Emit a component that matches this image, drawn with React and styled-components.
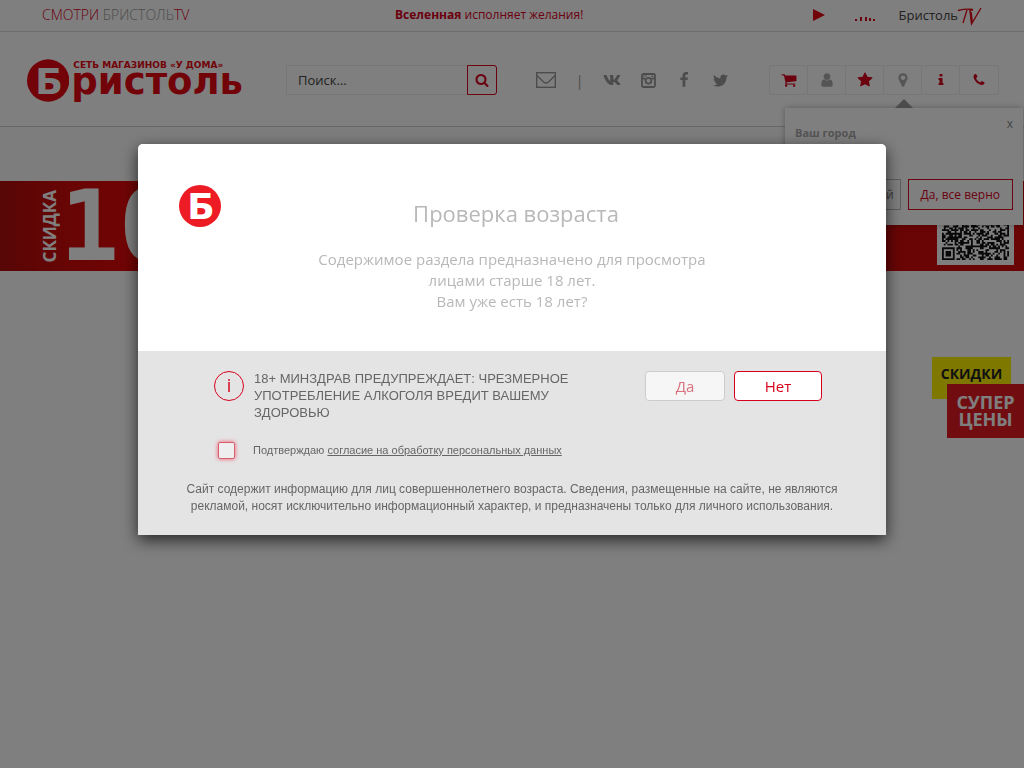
import React from 'react';
import styled, { createGlobalStyle } from 'styled-components';
import { FaVk } from 'react-icons/fa';

const GlobalStyle = createGlobalStyle`
	* {
		box-sizing: border-box;
	}

	body {
		margin: 0;
		background: #fff;
		font-family: 'Open Sans', 'Noto Sans', sans-serif;
		color: #555;
	}

	button,
	input {
		font-family: inherit;
		margin: 0;
	}

	p,
	h2 {
		margin: 0;
		font-weight: 400;
	}

	a {
		color: inherit;
	}
`;

const RED = '#d6001c';

// Icons, all on the same 1792 grid
const PATHS = {
	search: 'M1216 832q0-185-131.5-316.5t-316.5-131.5-316.5 131.5-131.5 316.5 131.5 316.5 316.5 131.5 316.5-131.5 131.5-316.5zm512 832q0 52-38 90t-90 38q-54 0-90-38l-343-342q-179 124-399 124-143 0-273.5-55.5t-225-150-150-225-55.5-273.5 55.5-273.5 150-225 225-150 273.5-55.5 273.5 55.5 225 150 150 225 55.5 273.5q0 220-124 399l343 343q37 37 37 90z',
	cart: 'M704 1536q0 52-38 90t-90 38-90-38-38-90 38-90 90-38 90 38 38 90zm896 0q0 52-38 90t-90 38-90-38-38-90 38-90 90-38 90 38 38 90zm128-1088v512q0 24-16.5 42.5t-40.5 21.5l-1044 122q13 60 13 70 0 16-24 64h920q26 0 45 19t19 45-19 45-45 19h-1024q-26 0-45-19t-19-45q0-11 8-31.5t16-36 21.5-40 15.5-29.5l-177-823h-204q-26 0-45-19t-19-45 19-45 45-19h256q16 0 28.5 6.5t19.5 15.5 13 24.5 8 26 5.5 29.5 4.5 26h1201q26 0 45 19t19 45z',
	user: 'M1536 1399q0 109-62.5 187t-150.5 78h-854q-88 0-150.5-78t-62.5-187q0-85 8.5-160.5t31.5-152 58.5-131 94-89 134.5-34.5q131 128 313 128t313-128q76 0 134.5 34.5t94 89 58.5 131 31.5 152 8.5 160.5zm-256-887q0 159-112.5 271.5t-271.5 112.5-271.5-112.5-112.5-271.5 112.5-271.5 271.5-112.5 271.5 112.5 112.5 271.5z',
	star: 'M1728 647q0 22-26 48l-363 354 86 500q1 7 1 20 0 21-10.5 35.5t-30.5 14.5q-19 0-40-12l-449-236-449 236q-22 12-40 12-21 0-31.5-14.5t-10.5-35.5q0-6 2-20l86-500-364-354q-25-27-25-48 0-37 56-46l502-73 225-455q19-41 49-41t49 41l225 455 502 73q56 9 56 46z',
	pin: 'M1152 640q0-106-75-181t-181-75-181 75-75 181 75 181 181 75 181-75 75-181zm256 0q0 109-33 179l-364 774q-16 33-47.5 52t-67.5 19-67.5-19-46.5-52l-365-774q-33-70-33-179 0-212 150-362t362-150 362 150 150 362z',
	info: 'M1216 1344v128q0 26-19 45t-45 19h-512q-26 0-45-19t-19-45v-128q0-26 19-45t45-19h64v-384h-64q-26 0-45-19t-19-45v-128q0-26 19-45t45-19h384q26 0 45 19t19 45v576h64q26 0 45 19t19 45zm-128-1152v192q0 26-19 45t-45 19h-256q-26 0-45-19t-19-45v-192q0-26 19-45t45-19h256q26 0 45 19t19 45z',
	phone: 'M1600 1240q0 27-10 70.5t-21 68.5q-21 50-122 106-94 51-186 51-27 0-53-3.5t-57-12.5-47-14.5-55.5-20.5-49.5-18q-98-35-175-83-127-79-264-216t-216-264q-48-77-83-175-3-9-18-49.5t-20.5-55.5-14.5-47-12.5-57-3.5-53q0-92 51-186 56-101 106-122 25-11 68.5-21t70.5-10q14 0 21 3 18 6 53 76 11 19 30 54t35 63.5 31 53.5q3 4 17.5 25t21.5 35.5 7 28.5q0 20-28.5 50t-62 55-62 53-28.5 46q0 9 5 22.5t8.5 20.5 14 24 11.5 19q76 137 174 235t235 174q2 1 19 11.5t24 14 20.5 8.5 22.5 5q18 0 46-28.5t53-62 55-62 50-28.5q14 0 28.5 7t35.5 21.5 25 17.5q25 15 53.5 31t63.5 35 54 30q70 35 76 53 3 7 3 21z',
	facebook: 'M1343 12v264h-157q-86 0-116 36t-30 108v189h293l-39 296h-254v759h-306v-759h-255v-296h255v-218q0-186 104-288.5t277-102.5q147 0 228 12z',
	twitter: 'M1684 408q-67 98-162 167 1 14 1 42 0 130-38 259.5t-115.5 248.5-184.5 210.5-258 146-323 54.5q-271 0-496-145 35 4 78 4 225 0 401-138-105-2-188-64.5t-114-159.5q33 5 61 5 43 0 85-11-112-23-185.5-111.5t-73.5-205.5v-4q68 38 146 41-66-44-105-115t-39-154q0-88 44-163 121 149 294.5 238.5t371.5 99.5q-8-38-8-74 0-134 94.5-228.5t228.5-94.5q140 0 236 102 109-21 205-78-37 115-142 178 93-10 186-50z',
};

function Icon({ name, size = 16 }) {
	return (
		<svg width={size} height={size} viewBox="0 0 1792 1792" fill="currentColor" aria-hidden="true">
			<path d={PATHS[name]}/>
		</svg>
	);
}

function EnvelopeIcon() {
	return (
		<svg width="20" height="16" viewBox="0 0 20 16" fill="none" stroke="currentColor" strokeWidth="1.4" aria-hidden="true">
			<rect x="0.7" y="0.7" width="18.6" height="14.6"/>
			<path d="M1 3.5 L7.5 10 Q10 12 12.5 10 L19 3.5"/>
		</svg>
	);
}

function InstagramIcon() {
	return (
		<svg width="15" height="15" viewBox="0 0 15 15" fill="none" stroke="currentColor" strokeWidth="1.8" aria-hidden="true">
			<rect x="1" y="1" width="13" height="13" rx="1.5"/>
			<circle cx="7.5" cy="7.8" r="2.9"/>
			<path d="M1 5.6 H4.6 M10.4 5.6 H14"/>
			<path d="M3 1 V4 M5 1 V4" strokeWidth="0.9"/>
			<rect x="10.5" y="2.6" width="1.8" height="1.4" fill="currentColor" stroke="none"/>
		</svg>
	);
}

// TopBar
const TopBar = styled.div`
	display: flex;
	align-items: center;
	height: 32px;
	padding: 0 42px 2px;
	border-bottom: 1px solid #d8d8d8;
	font-size: 12px;
	line-height: 18px;
	color: ${RED};
`;

const TvLink = styled.a`
	flex: 0 1 353px;
	font-size: 14px;
	text-decoration: none;
	font-weight: 300;

	span {
		color: #999;
	}
`;

const Player = styled.div`
	display: flex;
	align-items: center;
	margin-left: auto;
`;

const PlayButton = styled.button`
	display: flex;
	padding: 0;
	border: 0;
	background: none;
	margin-right: 30px;
`;

const Equalizer = styled.svg`
	margin: 8px 24px 0 0;
`;

const TvLogo = styled.span`
	display: flex;
	align-items: center;
	font-size: 13px;
	color: #444;

	svg {
		margin-top: 4px;
	}
`;

// Header
const Header = styled.header`
	position: relative;
	display: flex;
	align-items: center;
	height: 95px;
	padding: 2px 25px 0 27px;
	border-bottom: 1px solid #ccc;
`;

const Logo = styled.a`
	display: flex;
	align-items: center;
	width: 216px;
	margin-right: 43px;
	color: #e30613;
	font-family: 'DejaVu Sans', sans-serif;
	font-weight: 700;
	text-decoration: none;
`;

const LogoText = styled.span`
	display: flex;
	flex-direction: column;
	margin-left: 2px;
	padding-bottom: 6px;
	white-space: nowrap;

	small {
		margin-left: 2px;
		font-size: 9px;
		line-height: 10px;
	}

	span {
		font-size: 37px;
		line-height: 24px;
	}
`;

const SearchForm = styled.form`
	display: flex;
	width: 211px;
	height: 30px;
	margin-right: 39px;
`;

const SearchInput = styled.input`
	flex: 1;
	min-width: 0;
	padding: 0 11px;
	border: 1px solid #eee;
	border-right: 0;
	background: #fff;
	font-size: 13px;

	&::placeholder {
		color: #444;
		opacity: 1;
	}
`;

const SearchButton = styled.button`
	display: flex;
	align-items: center;
	justify-content: center;
	width: 30px;
	padding: 0;
	border: 1px solid ${RED};
	border-radius: 0 3px 3px 0;
	background: #fff;
	color: ${RED};
`;

const Socials = styled.div`
	display: flex;
	flex: 1;
	align-items: center;
	justify-content: space-between;
	margin-right: 40px;
	font-size: 14px;
	color: #999;

	a {
		display: flex;
	}
`;

const UserNav = styled.nav`
	display: flex;
	height: 30px;
	border: 1px solid #eee;
	border-radius: 4px;
`;

const NavButton = styled.button`
	display: flex;
	align-items: center;
	justify-content: center;
	width: 38px;
	padding: 0;
	border: 0;
	border-right: 1px solid #eee;
	background: none;
	color: ${({ $muted }) => ($muted ? '#aaa' : RED)};

	&:last-child {
		border-right: 0;
	}
`;

// City confirmation drop-down under the pin button
const CityPopup = styled.div`
	position: absolute;
	top: 76px;
	right: 1px;
	width: 238px;
	height: 117px;
	padding: 9px 10px 15px;
	background: #fff;
	box-shadow: 0 0 6px rgba(0, 0, 0, 0.3);
	display: flex;
	flex-direction: column;
	z-index: 1;

	&::before {
		content: '';
		position: absolute;
		top: -9px;
		left: 110px;
		border: 9px solid transparent;
		border-top: 0;
		border-bottom-color: #999;
	}
`;

const CloseButton = styled.button`
	align-self: flex-end;
	height: 14px;
	padding: 0;
	border: 0;
	background: none;
	font-size: 12px;
	line-height: 14px;
	color: #888;
`;

const CityTitle = styled.strong`
	font-size: 11px;
	line-height: 16px;
	margin-top: -6px;
	color: #aaa;
`;

const CityButtons = styled.div`
	display: flex;
	justify-content: flex-end;
	gap: 7px;
	margin-top: auto;
`;

const CityButton = styled.button`
	height: 31px;
	padding: 0 ${({ $primary }) => ($primary ? 12 : 6)}px;
	border: 1px solid ${({ $primary }) => ($primary ? RED : '#bbb')};
	background: #fff;
	font-size: 12px;
	white-space: nowrap;
	color: ${({ $primary }) => ($primary ? RED : '#777')};
`;

// Banner
const Menu = styled.div`
	height: 54px;
	background: #fafafa;
`;

const Banner = styled.section`
	display: flex;
	align-items: center;
	height: 90px;
	padding: 0 10px 0 40px;
	overflow: hidden;
	background: linear-gradient(90deg, #b00c0c 0, #d20a0a 70px, #e60808 140px, #d20a0a 300px);
	color: #fff;
`;

const BannerLabel = styled.span`
	writing-mode: vertical-rl;
	transform: rotate(180deg);
	font-size: 17px;
	line-height: 20px;
	font-weight: 700;
`;

const BannerNumber = styled.span`
	font-family: 'DejaVu Sans Mono', monospace;
	font-weight: 700;
	font-size: 98px;
	line-height: 90px;
`;

const QrBox = styled.div`
	display: flex;
	align-self: flex-start;
	margin-left: auto;
	margin-top: 7px;
	padding: 5px;
	background: #fff;
`;

// Side badges
const Promo = styled.aside`
	display: flex;
	flex-direction: column;
	align-items: flex-end;
	margin-top: 86px;
	font-weight: 700;
`;

const SaleBadge = styled.a`
	width: 79px;
	height: 42px;
	margin-right: 13px;
	padding-top: 8px;
	background: #fff000;
	color: #222;
	font-size: 14px;
	line-height: 18px;
	text-align: center;
	text-decoration: none;
`;

const SuperBadge = styled.a`
	width: 77px;
	height: 54px;
	margin-top: -15px;
	padding-top: 10px;
	background: #e31b23;
	color: #fff;
	font-size: 18px;
	line-height: 17px;
	text-align: center;
	text-decoration: none;
`;

// Age check
const Overlay = styled.div`
	position: fixed;
	inset: 0;
	z-index: 10;
	padding: 144px 16px 16px;
	background: rgba(0, 0, 0, 0.5);
`;

const Modal = styled.div`
	max-width: 748px;
	margin: 0 auto;
	border-radius: 5px 5px 0 0;
	background: #e4e4e4;
	box-shadow: 0 5px 16px rgba(0, 0, 0, 0.7);
`;

const ModalHead = styled.div`
	display: grid;
	grid-template-columns: 42px 1fr 42px;
	padding: 41px 41px 39px;
	border-radius: 5px 5px 0 0;
	background: #fff;
	text-align: center;
	color: #b8b8b8;
`;

const ModalTitle = styled.h2`
	margin: 12px 0 20px;
	padding-left: 8px;
	font-size: 22px;
	line-height: 32px;
`;

const Question = styled.p`
	font-size: 15px;
	line-height: 21px;
`;

const ModalBody = styled.div`
	padding: 19px 40px 20px 76px;
	font-family: 'Liberation Sans', Arial, sans-serif;
	color: #666;
`;

const WarningRow = styled.div`
	display: flex;
	align-items: flex-start;
	padding-right: 24px;
`;

const InfoMark = styled.span`
	flex: none;
	width: 30px;
	height: 30px;
	margin: 1px 10px 0 0;
	border: 1px solid ${RED};
	border-radius: 50%;
	color: ${RED};
	font-family: 'Open Sans', sans-serif;
	font-size: 18px;
	line-height: 26px;
	text-align: center;
`;

const Warning = styled.p`
	width: 320px;
	font-size: 13px;
	line-height: 17px;
`;

const Answers = styled.div`
	display: flex;
	gap: 9px;
	margin: 1px 0 0 auto;
`;

const AnswerButton = styled.button`
	width: ${({ $active }) => ($active ? 88 : 80)}px;
	height: 30px;
	padding: 0;
	border: 1px solid ${({ $active }) => ($active ? RED : '#ccc')};
	border-radius: 4px;
	background: ${({ $active }) => ($active ? '#fff' : '#f6f6f6')};
	color: ${({ $active }) => ($active ? RED : '#d9717e')};
	font-family: 'Open Sans', sans-serif;
	font-size: 15px;
`;

const Consent = styled.div`
	display: flex;
	align-items: center;
	margin: 20px 0 22px 4px;
	font-size: 11px;
	line-height: 18px;

	input {
		appearance: none;
		width: 17px;
		height: 17px;
		margin-right: 18px;
		border: 1px solid #d8606e;
		border-radius: 2px;
		background: #eee;
		box-shadow: 0 0 4px #f0506a;
	}
`;

const Notice = styled.p`
	margin-left: -36px;
	font-size: 12px;
	line-height: 17px;
	text-align: center;
`;

function RoundLogo({ size, color }) {
	return (
		<svg width={size} height={size} viewBox="0 0 42 42" aria-hidden="true">
			<circle cx="21" cy="21" r="21" fill={color}/>
			<text x="22" y="34" textAnchor="middle" fontFamily="DejaVu Sans" fontWeight="700" fontSize="36" fill="#fff">Б</text>
		</svg>
	);
}

const QR_SIZE = 37;

function isFinder(x, y) {
	const inX = x < 7 || x >= QR_SIZE - 7;
	const inY = y < 7 || y >= QR_SIZE - 7;
	return inX && inY && !(x > 6 && y > 6);
}

function isDark(x, y) {
	if (isFinder(x, y)) {
		const dx = Math.abs((x < 7 ? x : x - QR_SIZE + 7) - 3);
		const dy = Math.abs((y < 7 ? y : y - QR_SIZE + 7) - 3);
		return Math.max(dx, dy) !== 2;
	}
	if ((x === 7 && y > QR_SIZE - 9) || (y === QR_SIZE - 8 && x < 8)) return false;
	const noise = Math.sin(x * 12.9898 + y * 78.233) * 43758.5453;
	return noise - Math.floor(noise) < 0.55;
}

function QrCode() {
	const cells = [];
	for (let y = 0; y < QR_SIZE; y++) {
		for (let x = 0; x < QR_SIZE; x++) {
			if (isDark(x, y)) cells.push(`M${x} ${y}h1v1h-1z`);
		}
	}
	return (
		<svg width="67" height="67" viewBox="0 0 37 37" aria-hidden="true">
			<path d={cells.join('')} fill="#111"/>
		</svg>
	);
}

export default function App() {
	return (
		<>
			<GlobalStyle/>
			<TopBar>
				<TvLink href="#tv">СМОТРИ <span>БРИСТОЛЬ</span>TV</TvLink>
				<div><b>Вселенная</b> исполняет желания!</div>
				<Player>
					<PlayButton aria-label="Play">
						<svg width="12" height="12" viewBox="0 0 12 12"><path d="M0 0 L12 6 L0 12z" fill="#e30613"/></svg>
					</PlayButton>
					<Equalizer width="20" height="4" viewBox="0 0 20 4" fill={RED}>
						<path d="M0 2h2v2h-2z M5 0h2v4h-2z M10 0h2v4h-2z M14 1h2v3h-2z M18 2h2v2h-2z"/>
					</Equalizer>
					<TvLogo>
						Бристоль
						<svg width="24" height="19" viewBox="0 0 24 19" fill="none" stroke="#e30613" strokeWidth="1.3" aria-hidden="true">
							<path d="M0 3.5 Q8 1.5 15 2.5 M9 3 L5 16 M12 3.5 L13.5 17 L23 1 M11 3 L15 3"/>
							<path d="M12.8 5 L14 15" strokeWidth="2"/>
						</svg>
					</TvLogo>
				</Player>
			</TopBar>
			<Header>
				<Logo href="#home">
					<RoundLogo size={43} color="#e30613"/>
					<LogoText>
						<small>СЕТЬ МАГАЗИНОВ «У ДОМА»</small>
						<span>ристоль</span>
					</LogoText>
				</Logo>
				<SearchForm>
					<SearchInput placeholder="Поиск..." aria-label="Поиск"/>
					<SearchButton type="button" aria-label="Найти"><Icon name="search" size={14}/></SearchButton>
				</SearchForm>
				<Socials>
					<a href="#mail" aria-label="Почта"><EnvelopeIcon/></a>
					<span>|</span>
					<a href="#vk" aria-label="VK"><FaVk size={18}/></a>
					<a href="#instagram" aria-label="Instagram"><InstagramIcon/></a>
					<a href="#facebook" aria-label="Facebook"><Icon name="facebook"/></a>
					<a href="#twitter" aria-label="Twitter"><Icon name="twitter" size={17}/></a>
				</Socials>
				<UserNav>
					<NavButton aria-label="Корзина"><Icon name="cart"/></NavButton>
					<NavButton aria-label="Профиль" $muted><Icon name="user"/></NavButton>
					<NavButton aria-label="Избранное"><Icon name="star"/></NavButton>
					<NavButton aria-label="Город" $muted><Icon name="pin"/></NavButton>
					<NavButton aria-label="Информация"><Icon name="info" size={14}/></NavButton>
					<NavButton aria-label="Телефон"><Icon name="phone" size={14}/></NavButton>
				</UserNav>
				<CityPopup>
					<CloseButton aria-label="Закрыть">x</CloseButton>
					<CityTitle>Ваш город</CityTitle>
					<CityButtons>
						<CityButton>Другой</CityButton>
						<CityButton $primary>Да, все верно</CityButton>
					</CityButtons>
				</CityPopup>
			</Header>
			<Menu/>
			<Banner>
				<BannerLabel>СКИДКА</BannerLabel>
				<BannerNumber>10</BannerNumber>
				<QrBox><QrCode/></QrBox>
			</Banner>
			<Promo>
				<SaleBadge href="#sale">СКИДКИ</SaleBadge>
				<SuperBadge href="#super">СУПЕР<br/>ЦЕНЫ</SuperBadge>
			</Promo>
			<Overlay>
				<Modal role="dialog" aria-labelledby="age-title">
					<ModalHead>
						<RoundLogo size={42} color="#ed1c24"/>
						<div>
							<ModalTitle id="age-title">Проверка возраста</ModalTitle>
							<Question>
								Содержимое раздела предназначено для просмотра<br/>
								лицами старше 18 лет.<br/>
								Вам уже есть 18 лет?
							</Question>
						</div>
					</ModalHead>
					<ModalBody>
						<WarningRow>
							<InfoMark>i</InfoMark>
							<Warning>18+ МИНЗДРАВ ПРЕДУПРЕЖДАЕТ: ЧРЕЗМЕРНОЕ УПОТРЕБЛЕНИЕ АЛКОГОЛЯ ВРЕДИТ ВАШЕМУ ЗДОРОВЬЮ</Warning>
							<Answers>
								<AnswerButton>Да</AnswerButton>
								<AnswerButton $active>Нет</AnswerButton>
							</Answers>
						</WarningRow>
						<Consent>
							<input type="checkbox" id="consent"/>
							<label htmlFor="consent">Подтверждаю <a href="#consent">согласие на обработку персональных данных</a></label>
						</Consent>
						<Notice>
							Сайт содержит информацию для лиц совершеннолетнего возраста. Сведения, размещенные на сайте, не являются рекламой, носят исключительно информационный характер, и предназначены только для личного использования.
						</Notice>
					</ModalBody>
				</Modal>
			</Overlay>
		</>
	);
}
